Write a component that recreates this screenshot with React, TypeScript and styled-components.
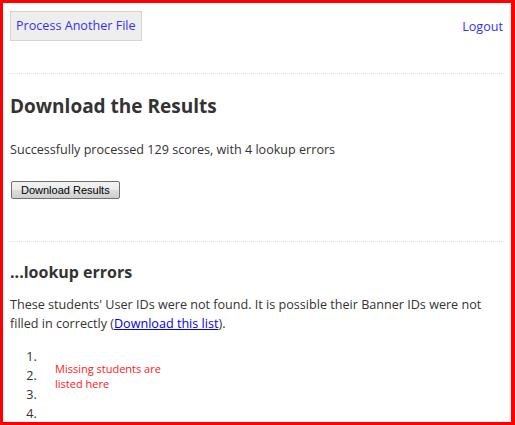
import styled, { createGlobalStyle } from "styled-components";

const GlobalStyle = createGlobalStyle`
  html, body {
    margin: 0;
    padding: 0;
    background: #fff;
  }
  body {
    font-family: "Open Sans", "Noto Sans", sans-serif;
    color: #333;
  }
`;

export default function App() {
  return (
    <>
      <GlobalStyle />
      <Frame>
        <TopBar>
          <NavButton>Process Another File</NavButton>
          <NavLink href="#">Logout</NavLink>
        </TopBar>
        <Rule />
        <Section>
          <Heading>Download the Results</Heading>
          <Text>Successfully processed 129 scores, with 4 lookup errors</Text>
          <PlainButton>Download Results</PlainButton>
        </Section>
        <Rule />
        <Section>
          <SubHeading>...lookup errors</SubHeading>
          <Text>
            These students' User IDs were not found. It is possible their Banner IDs were not
            filled in correctly (<TextLink href="#">Download this list</TextLink>).
          </Text>
          <ListWrap>
            <NumberList>
              <li></li>
              <li></li>
              <li></li>
              <li></li>
            </NumberList>
            <Note>
              Missing students are
              <br />
              listed here
            </Note>
          </ListWrap>
        </Section>
      </Frame>
    </>
  );
}

const Frame = styled.div`
  box-sizing: border-box;
  width: 515px;
  height: 425px;
  border: 3px solid #ff0000;
  border-right-width: 4px;
  padding: 8px 7px 0 7px;
  overflow: hidden;
`;

const TopBar = styled.div`
  display: flex;
  justify-content: space-between;
  align-items: flex-start;
`;

const NavButton = styled.div`
  background: #eeeeee;
  border: 1px solid #d4d4d4;
  color: #3333ee;
  font-size: 12.6px;
  padding: 5px 5px;
  line-height: 18px;
`;

const NavLink = styled.a`
  color: #3333ee;
  font-size: 12.6px;
  text-decoration: none;
  margin-top: 7px;
  margin-right: 1px;
`;

const Rule = styled.hr`
  border: 0;
  border-top: 1px dotted #dddddd;
  margin: 32px 0 0 0;
`;

const Section = styled.div`
  padding-bottom: 0;
`;

const Heading = styled.h2`
  font-size: 19px;
  font-weight: 700;
  margin: 20px 0 0 0;
  line-height: 24px;
  color: #333;
`;

const SubHeading = styled.h3`
  font-size: 16px;
  font-weight: 700;
  margin: 19px 0 0 0;
  line-height: 22px;
  color: #333;
`;

const Text = styled.p`
  font-size: 12.6px;
  line-height: 19px;
  margin: 22px 0 0 0;

  ${SubHeading} + & {
    margin-top: 12px;
  }
`;

const PlainButton = styled.button`
  display: block;
  margin: 22px 0 42px 1px;
  font-family: "Liberation Sans", Arial, sans-serif;
  font-size: 11px;
  color: #000;
  padding: 0 9px;
  height: 18px;
  border: 1px solid #707070;
  border-radius: 2px;
  background: linear-gradient(#f2f2f2 0%, #ebebeb 50%, #dddddd 51%, #cfcfcf 100%);
`;

const TextLink = styled.a`
  color: #0000ee;
  text-decoration: underline;
`;

const ListWrap = styled.div`
  position: relative;
  margin-top: 14px;
`;

const NumberList = styled.ol`
  margin: 0;
  padding-left: 30px;
  font-size: 12.6px;
  line-height: 19px;
  li {
    height: 19px;
  }
`;

const Note = styled.div`
  position: absolute;
  left: 45px;
  top: 14px;
  color: #ff2020;
  font-size: 11px;
  line-height: 15px;
`;
